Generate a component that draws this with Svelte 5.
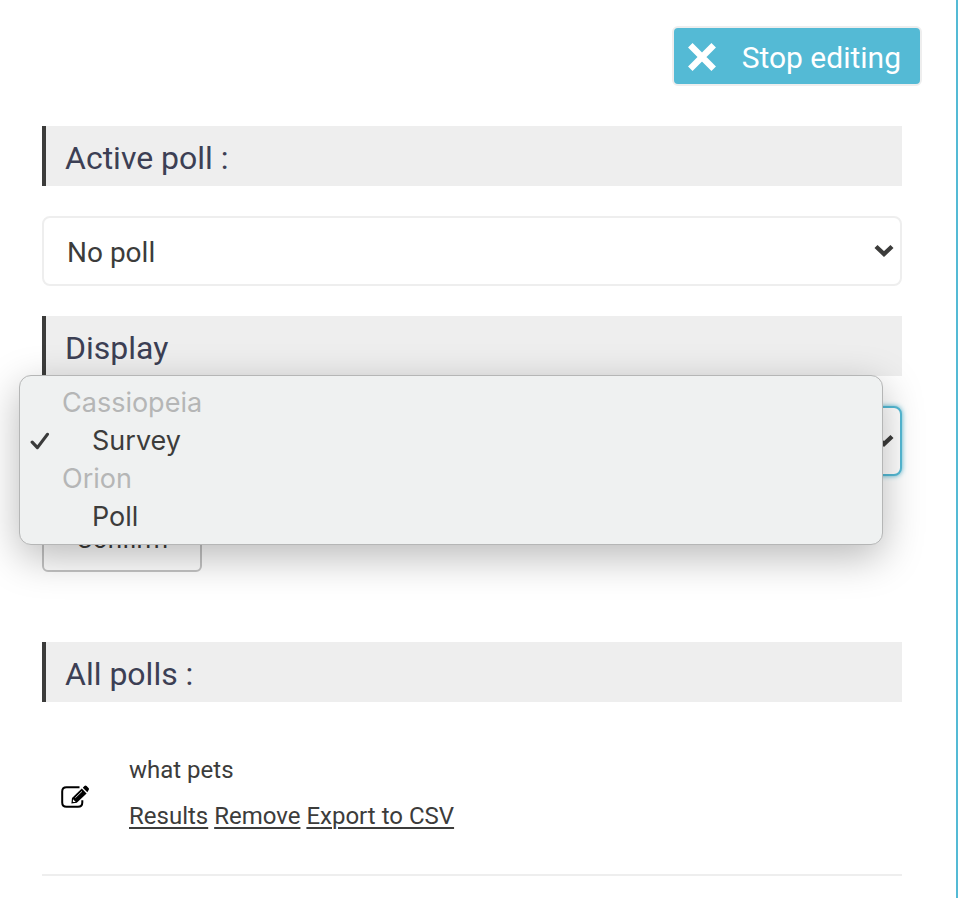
<script>
  let activePoll = $state('none');
  let display = $state('survey');
  let menuOpen = $state(true);

  const groups = [
    { label: 'Cassiopeia', options: [{ value: 'survey', label: 'Survey' }] },
    { label: 'Orion', options: [{ value: 'poll', label: 'Poll' }] }
  ];

  const polls = [{ title: 'what pets' }];

  function choose(value) {
    display = value;
    menuOpen = false;
  }
</script>

{#snippet chevron()}
  <svg class="chevron" viewBox="0 0 20 14" aria-hidden="true">
    <path d="M2 2.5 L10 10 L18 2.5" fill="none" stroke="#3c3c3b" stroke-width="4.4" />
  </svg>
{/snippet}

<main class="panel">
  <header class="toolbar">
    <button type="button" class="stop">
      <svg viewBox="0 0 28 28" aria-hidden="true">
        <path d="M2.3 2.3 L25.7 25.7 M25.7 2.3 L2.3 25.7" fill="none" stroke="#fff" stroke-width="6.4" />
      </svg>
      <span>Stop editing</span>
    </button>
  </header>

  <form onsubmit={(e) => e.preventDefault()}>
    <h2><label for="active-poll">Active poll :</label></h2>
    <div class="field">
      <select id="active-poll" bind:value={activePoll}>
        <option value="none">No poll</option>
        {#each polls as poll}
          <option value={poll.title}>{poll.title}</option>
        {/each}
      </select>
      {@render chevron()}
    </div>

    <h2><label for="display">Display</label></h2>
    <div class="field">
      <select id="display" class:focused={menuOpen} bind:value={display}>
        {#each groups as group}
          <optgroup label={group.label}>
            {#each group.options as option}
              <option value={option.value}>{option.label}</option>
            {/each}
          </optgroup>
        {/each}
      </select>
      {@render chevron()}

      {#if menuOpen}
        <div class="menu" role="listbox" aria-label="Display">
          {#each groups as group}
            <div role="group" aria-label={group.label}>
              <div class="group-label">{group.label}</div>
              {#each group.options as option}
                <button
                  type="button"
                  class="option"
                  role="option"
                  aria-selected={display === option.value}
                  onclick={() => choose(option.value)}
                >
                  {#if display === option.value}
                    <svg class="check" viewBox="0 0 20 18" aria-hidden="true">
                      <path d="M2.2 10.2 L7.4 15.6 L17.4 2.4" fill="none" stroke="#3a3b3b" stroke-width="3.2" stroke-linecap="round" stroke-linejoin="round" />
                    </svg>
                  {/if}
                  {option.label}
                </button>
              {/each}
            </div>
          {/each}
        </div>
      {/if}
    </div>

    <button type="submit" class="confirm">Confirm</button>
  </form>

  <section>
    <h2>All polls :</h2>
    <ul class="polls">
      {#each polls as poll}
        <li>
          <button type="button" class="edit" aria-label="Edit {poll.title}">
            <svg viewBox="0 0 28 24" aria-hidden="true">
              <path d="M18.5 2.2 H5.5 Q1.2 2.2 1.2 6.5 V17.5 Q1.2 21.8 5.5 21.8 H17 Q21.3 21.8 21.3 17.5 V15.2" fill="none" stroke="#000" stroke-width="2" />
              <path d="M10.4 18.6 L11 13 L20.8 3.6 L25.6 8.4 L15.8 17.8 Z" fill="#000" />
              <path d="M21.8 2.7 L23.4 1.1 Q24.5 0.1 25.6 1.1 L27.5 3 Q28.5 4.1 27.5 5.2 L26.3 7.3 Z" fill="#000" />
              <path d="M14.3 12.8 L21 6.3" stroke="#fff" stroke-width="0.8" />
              <path d="M12.1 14.3 L14.7 16.9 L12.2 17.1 L11.8 16.7 Z" fill="#fff" />
            </svg>
          </button>
          <div class="details">
            <p>{poll.title}</p>
            <nav>
              <a href="#results">Results</a>
              <a href="#remove">Remove</a>
              <a href="#export">Export to CSV</a>
            </nav>
          </div>
        </li>
      {/each}
    </ul>
  </section>
</main>

<style>
  :global(body) {
    margin: 0;
    background: #fff;
  }

  .panel {
    box-sizing: border-box;
    min-height: 100vh;
    margin-right: 20px;
    padding: 26px 54px 0 42px;
    border-right: 2px solid #54bad5;
    color: #3c3c3b;
    font-family: Roboto, 'Liberation Sans', sans-serif;
    font-size: 24px;
  }

  button,
  select {
    box-sizing: border-box;
    margin: 0;
    color: inherit;
    font-family: inherit;
  }

  .toolbar {
    display: flex;
    justify-content: flex-end;
    margin: 0 -20px 40px 0;
  }

  .stop {
    display: flex;
    align-items: center;
    gap: 26px;
    height: 60px;
    padding: 2px 19px 0 14px;
    border: 2px solid #eee;
    border-radius: 6px;
    background: #54bad5;
    color: #fff;
    font-size: 30px;
  }

  .stop svg {
    width: 28px;
    height: 28px;
  }

  h2 {
    margin: 0 0 30px;
    padding: 4px 0 0 19px;
    border-left: 4px solid #3c3c3b;
    background: #eee;
    color: #3c3f54;
    font-size: 32px;
    font-weight: 400;
    line-height: 56px;
  }

  .field {
    position: relative;
    margin-bottom: 30px;
  }

  select {
    display: block;
    width: 100%;
    height: 70px;
    padding: 2px 48px 0 23px;
    border: 2px solid #eee;
    border-radius: 8px;
    outline: none;
    appearance: none;
    background: #fff;
    font-size: 28px;
  }

  select.focused {
    border-color: #54bad5;
    box-shadow: 0 0 5px #54bad5;
  }

  .chevron {
    position: absolute;
    top: 28px;
    right: 8px;
    width: 20px;
    height: 14px;
    pointer-events: none;
  }

  .menu {
    position: absolute;
    z-index: 1;
    top: -31px;
    right: 19px;
    left: -23px;
    box-sizing: border-box;
    padding: 8px 0;
    border: 1px solid #b5b6b6;
    border-radius: 12px;
    background: #eff1f1;
    box-shadow: 0 12px 40px rgba(0, 0, 0, 0.28);
    font-family: Inter, 'Liberation Sans', sans-serif;
    font-size: 27px;
    line-height: 38px;
  }

  .group-label {
    padding-left: 42px;
    color: #b5b6b6;
  }

  .option {
    display: block;
    position: relative;
    width: 100%;
    height: 38px;
    padding: 0 0 0 72px;
    border: 0;
    background: none;
    font-size: inherit;
    line-height: inherit;
    text-align: left;
  }

  .check {
    position: absolute;
    top: 10px;
    left: 10px;
    width: 20px;
    height: 18px;
  }

  .confirm {
    display: block;
    width: 160px;
    height: 66px;
    margin-bottom: 70px;
    padding: 0;
    border: 2px solid #c4c4c4;
    border-radius: 6px;
    background: #fff;
    font-size: 26px;
  }

  .polls {
    margin: 0;
    padding: 0;
    list-style: none;
  }

  .polls li {
    display: flex;
    align-items: center;
    gap: 40px;
    padding: 15px 0 35px 19px;
    border-bottom: 2px solid #eee;
  }

  .edit {
    display: flex;
    padding: 8px 0 0;
    border: 0;
    background: none;
  }

  .edit svg {
    width: 28px;
    height: 24px;
  }

  .details {
    line-height: 46px;
  }

  p {
    margin: 0;
  }

  a {
    color: inherit;
    text-decoration-thickness: 2px;
    text-underline-offset: 3px;
  }
</style>
